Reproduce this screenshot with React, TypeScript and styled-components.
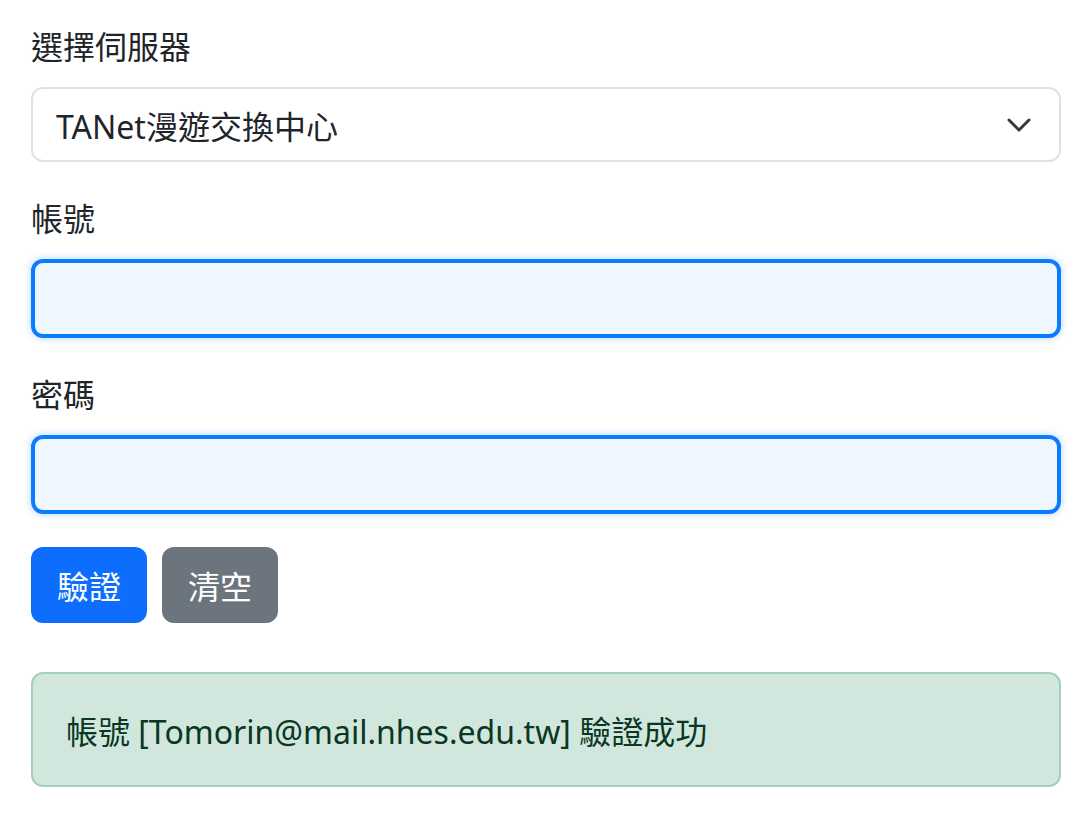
import React, { useState } from "react";
import styled, { createGlobalStyle } from "styled-components";

const GlobalStyle = createGlobalStyle`
  * {
    box-sizing: border-box;
  }
  body {
    margin: 0;
    background-color: #ffffff;
    font-family: "Noto Sans", "Noto Sans CJK TC", sans-serif;
    color: #212529;
  }
`;

const Main = styled.div`
  padding: 23px 26px 0 31px;
`;

const Field = styled.div`
  margin-bottom: 33px;
`;

const Label = styled.label`
  display: block;
  font-size: 32px;
  line-height: 48px;
  margin-bottom: 16px;
`;

const SelectBox = styled.div`
  position: relative;
  height: 75px;
  border: 2px solid #dee2e6;
  border-radius: 12px;
  background-color: #ffffff;
  display: flex;
  align-items: center;
  padding: 0 23px;
  font-size: 32px;
  svg {
    position: absolute;
    right: 24px;
    top: 50%;
    transform: translateY(-50%);
  }
`;

const Input = styled.input`
  display: block;
  width: 100%;
  height: 79px;
  border: 4px solid #0a7cff;
  border-radius: 12px;
  background-color: #eef6ff;
  box-shadow: 0 0 8px rgba(10, 124, 255, 0.3);
  font-size: 32px;
  padding: 0 24px;
  outline: none;
`;

const Buttons = styled.div`
  display: flex;
  gap: 15px;
  margin-top: 1px;
`;

const Button = styled.button<{ $variant: "primary" | "secondary" }>`
  height: 76px;
  padding: 0 26px;
  border: 0;
  border-radius: 12px;
  font-family: inherit;
  font-size: 32px;
  color: #ffffff;
  background-color: ${(p) => (p.$variant === "primary" ? "#0d6efd" : "#6c757d")};
  cursor: pointer;
`;

const Alert = styled.div`
  margin-top: 49px;
  height: 115px;
  border: 2px solid #a3cfbb;
  border-radius: 12px;
  background-color: #d1e7dd;
  color: #0a3622;
  display: flex;
  align-items: center;
  padding: 0 33px;
  font-size: 32px;
`;

const App = () => {
  const [account, setAccount] = useState("");
  const [password, setPassword] = useState("");

  return (
    <Main>
      <GlobalStyle />
      <Field>
        <Label>選擇伺服器</Label>
        <SelectBox>
          TANet漫遊交換中心
          <svg width="32" height="32" viewBox="0 0 16 16" fill="none">
            <path
              d="M3 5.5l5 5 5-5"
              stroke="#343a40"
              strokeWidth="1.5"
              strokeLinecap="round"
              strokeLinejoin="round"
            />
          </svg>
        </SelectBox>
      </Field>
      <Field>
        <Label>帳號</Label>
        <Input value={account} onChange={(e) => setAccount(e.target.value)} />
      </Field>
      <Field>
        <Label>密碼</Label>
        <Input
          type="password"
          value={password}
          onChange={(e) => setPassword(e.target.value)}
        />
      </Field>
      <Buttons>
        <Button $variant="primary">驗證</Button>
        <Button $variant="secondary">清空</Button>
      </Buttons>
      <Alert>帳號 [Tomorin@mail.nhes.edu.tw] 驗證成功</Alert>
    </Main>
  );
};

export default App;
